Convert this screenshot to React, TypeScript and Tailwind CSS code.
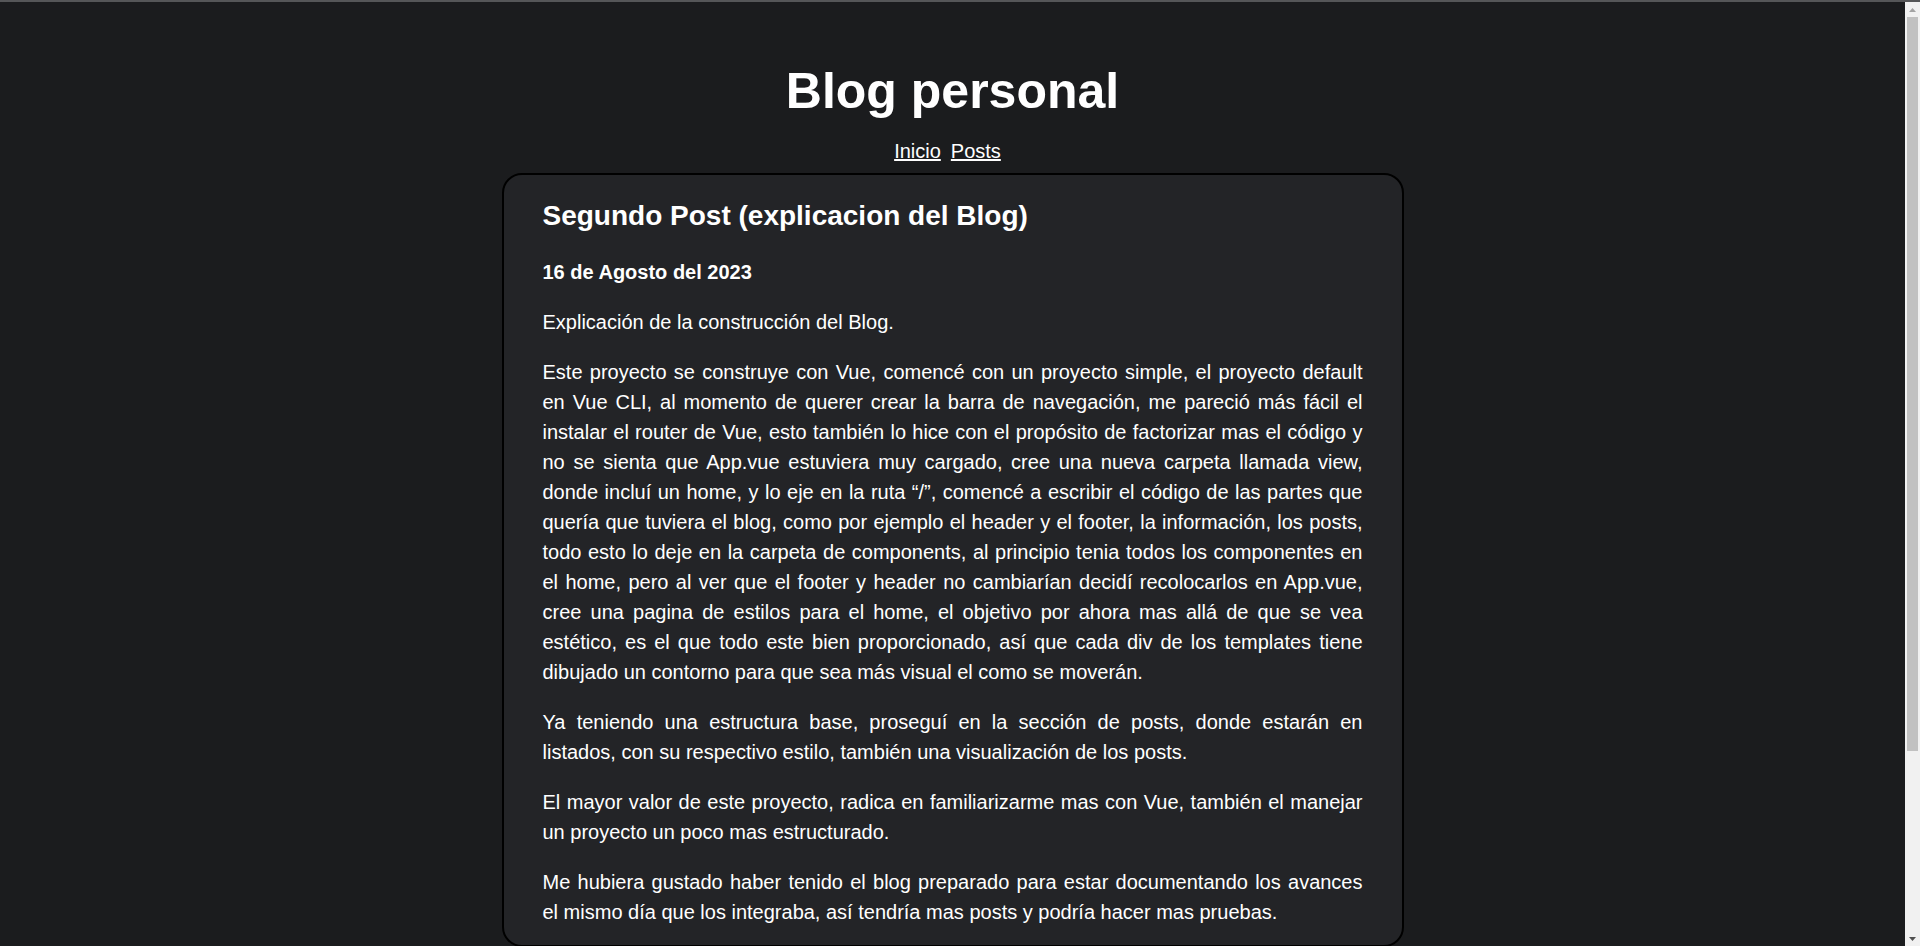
import React from "react";

const parrafos = [
  "Explicación de la construcción del Blog.",
  "Este proyecto se construye con Vue, comencé con un proyecto simple, el proyecto default en Vue CLI, al momento de querer crear la barra de navegación, me pareció más fácil el instalar el router de Vue, esto también lo hice con el propósito de factorizar mas el código y no se sienta que App.vue estuviera muy cargado, cree una nueva carpeta llamada view, donde incluí un home, y lo eje en la ruta “/”, comencé a escribir el código de las partes que quería que tuviera el blog, como por ejemplo el header y el footer, la información, los posts, todo esto lo deje en la carpeta de components, al principio tenia todos los componentes en el home, pero al ver que el footer y header no cambiarían decidí recolocarlos en App.vue, cree una pagina de estilos para el home, el objetivo por ahora mas allá de que se vea estético, es el que todo este bien proporcionado, así que cada div de los templates tiene dibujado un contorno para que sea más visual el como se moverán.",
  "Ya teniendo una estructura base, proseguí en la sección de posts, donde estarán en listados, con su respectivo estilo, también una visualización de los posts.",
  "El mayor valor de este proyecto, radica en familiarizarme mas con Vue, también el manejar un proyecto un poco mas estructurado.",
  "Me hubiera gustado haber tenido el blog preparado para estar documentando los avances el mismo día que los integraba, así tendría mas posts y podría hacer mas pruebas.",
];

const Header = () => (
  <header className="pt-[60px] text-center">
    <h1 className="text-[50px] font-bold leading-[58px]">Blog personal</h1>
    <nav className="mt-[20px] flex justify-center text-[20px] leading-[23px]">
      <a href="#" className="mr-[10px] underline">
        Inicio
      </a>
      <a href="#" className="mr-[10px] underline">
        Posts
      </a>
    </nav>
  </header>
);

const Post = () => (
  <article className="mx-auto mt-[10px] w-[902px] rounded-[20px] border-2 border-black bg-[#232427] px-[39px] pt-[25px] pb-[18px]">
    <h2 className="text-[28px] font-bold leading-[32px]">Segundo Post (explicacion del Blog)</h2>
    <div className="mt-[25px] flex flex-col gap-[20px] text-[20px] leading-[30px]">
      <p className="font-bold">16 de Agosto del 2023</p>
      {parrafos.map((texto, i) => (
        <p key={i} className="text-justify">
          {texto}
        </p>
      ))}
    </div>
  </article>
);

// barra de desplazamiento clasica del navegador
const Scrollbar = () => (
  <div className="flex w-[15px] flex-col bg-[#f1f1f1]">
    <div className="flex h-[15px] items-center justify-center">
      <svg width="9" height="6" viewBox="0 0 9 6">
        <path d="M4.5 1 L8 5 L1 5 Z" fill="#a3a3a3" />
      </svg>
    </div>
    <div className="flex-1 px-[2px]">
      <div className="h-[734px] bg-[#c1c1c1]" />
    </div>
    <div className="flex h-[15px] items-center justify-center">
      <svg width="9" height="6" viewBox="0 0 9 6">
        <path d="M1 1 L8 1 L4.5 5 Z" fill="#505050" />
      </svg>
    </div>
  </div>
);

export default function App() {
  return (
    <div className="flex h-[946px] flex-col overflow-hidden bg-[#1b1c1e] font-['Liberation_Sans',Arial,sans-serif] text-white">
      <div className="h-[2px] bg-[#555658]" />
      <div className="flex min-h-0 flex-1">
        <div className="min-w-0 flex-1 overflow-hidden">
          <Header />
          <main>
            <Post />
          </main>
        </div>
        <Scrollbar />
      </div>
    </div>
  );
}
